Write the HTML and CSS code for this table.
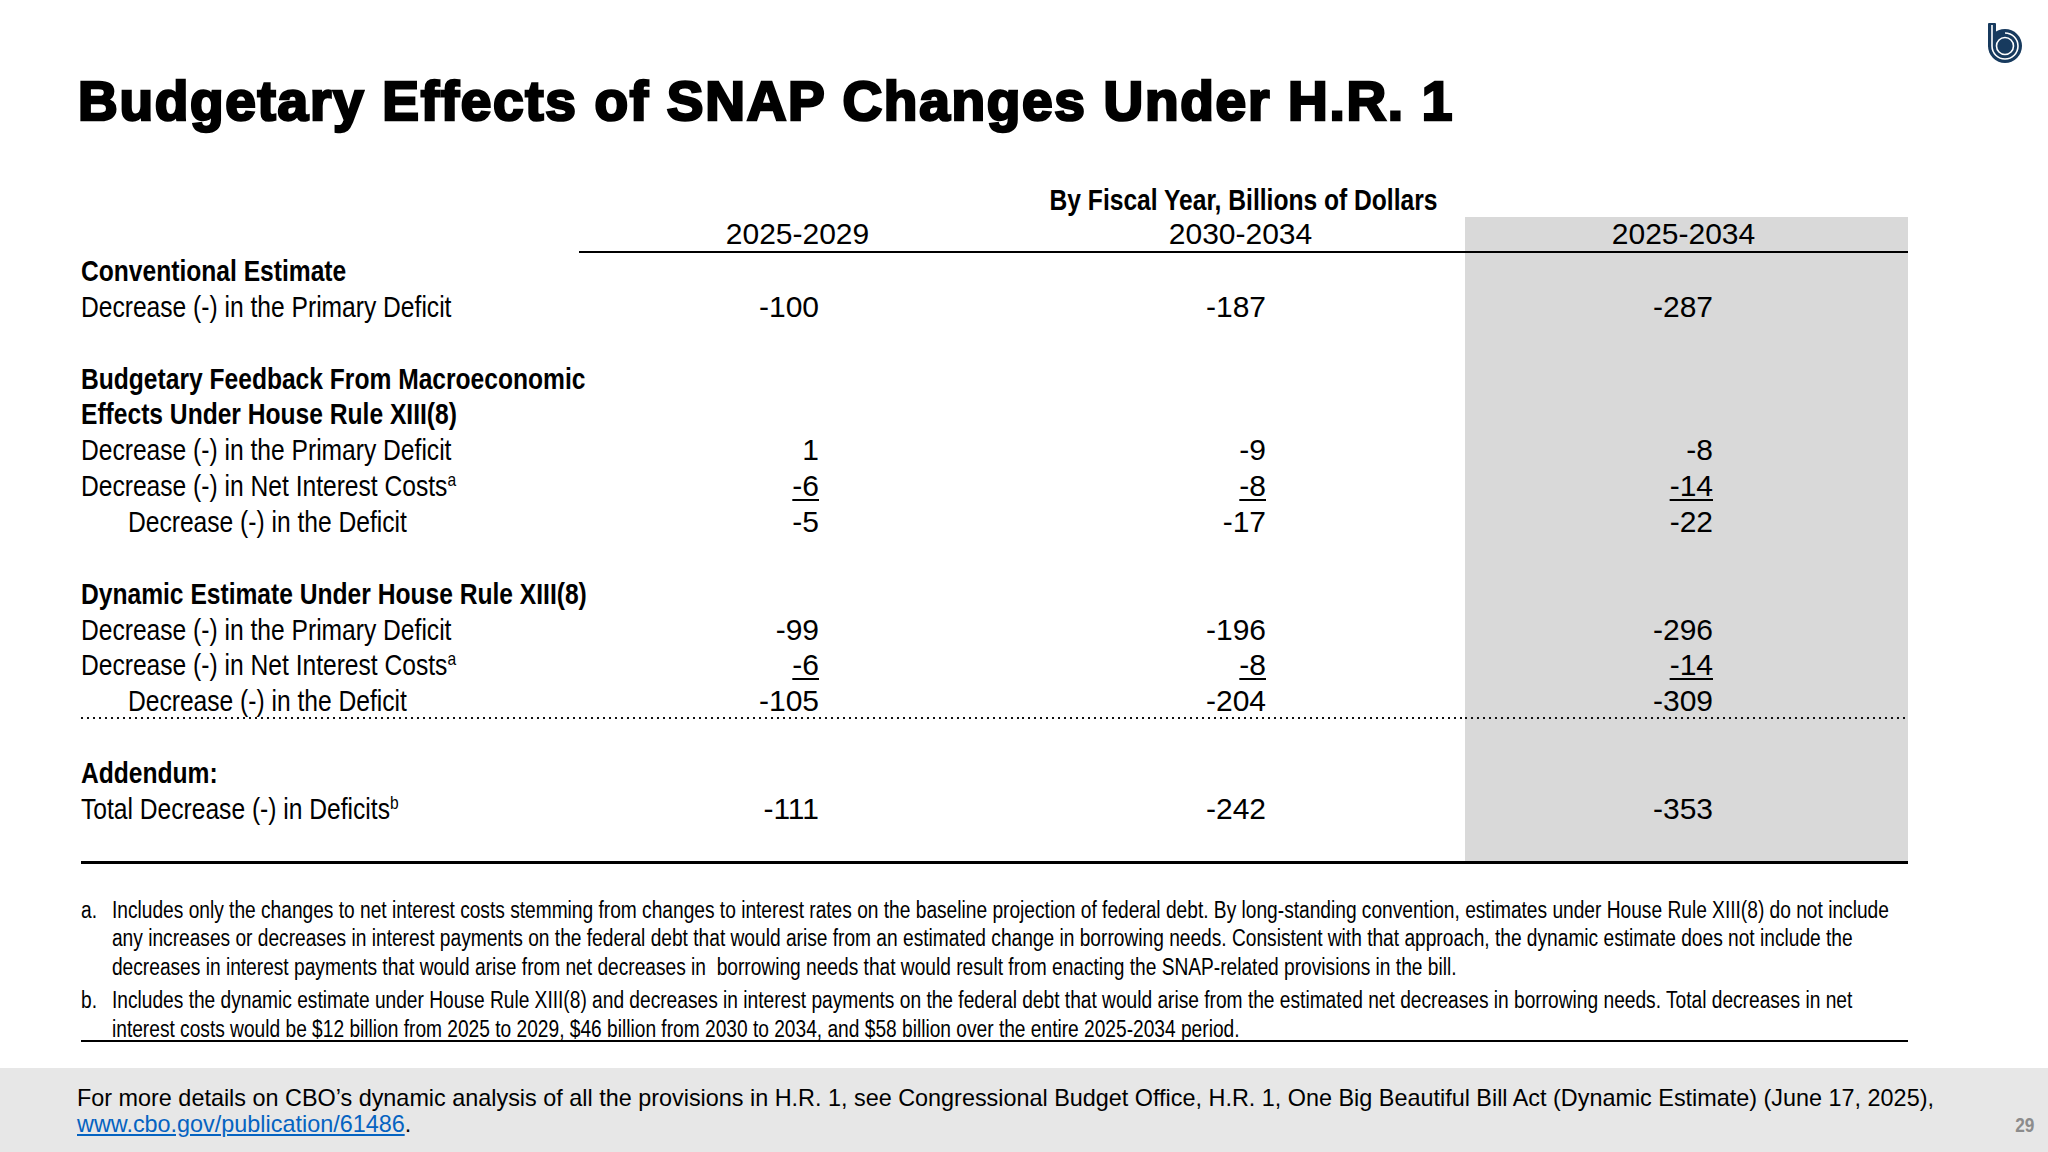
FILE: index.html
```html
<!DOCTYPE html>
<html lang="en">
<head>
<meta charset="utf-8">
<title>Budgetary Effects of SNAP Changes Under H.R. 1</title>
<link rel="stylesheet" href="styles.css">
</head>
<body>
<div class="slide">
  <header class="top">
    <h1 class="title">Budgetary Effects of SNAP Changes Under H.R. 1</h1>
    <svg class="logo" viewBox="0 0 40 44" aria-label="CBO logo">
      <rect x="4" y="3" width="8" height="24" rx="1" fill="#173a5e"/>
      <circle cx="21" cy="26" r="17" fill="#173a5e"/>
      <path d="M8 5 V26 A13 13 0 1 0 21 13" fill="none" stroke="#fff" stroke-width="1.6"/>
      <circle cx="21" cy="26" r="8.5" fill="none" stroke="#fff" stroke-width="1.6"/>
    </svg>
  </header>

  <table class="budget">
    <colgroup>
      <col class="c-label"><col class="c-num"><col class="c-num"><col class="c-num">
    </colgroup>
    <thead>
      <tr class="caption-row"><th></th><th colspan="3" class="caption"><span class="nw nc">By Fiscal Year, Billions of Dollars</span></th></tr>
      <tr class="head-row"><th></th><th class="yr">2025-2029</th><th class="yr">2030-2034</th><th class="yr g">2025-2034</th></tr>
    </thead>
    <tbody>
      <tr><td class="lab sec"><span class="nw">Conventional Estimate</span></td><td></td><td></td><td class="g"></td></tr>
      <tr><td class="lab"><span class="nw">Decrease (-) in the Primary Deficit</span></td><td>-100</td><td>-187</td><td class="g">-287</td></tr>
      <tr><td class="lab"></td><td></td><td></td><td class="g"></td></tr>
      <tr><td class="lab sec"><span class="nw">Budgetary Feedback From Macroeconomic</span></td><td></td><td></td><td class="g"></td></tr>
      <tr><td class="lab sec"><span class="nw">Effects Under House Rule XIII(8)</span></td><td></td><td></td><td class="g"></td></tr>
      <tr><td class="lab"><span class="nw">Decrease (-) in the Primary Deficit</span></td><td>1</td><td>-9</td><td class="g">-8</td></tr>
      <tr><td class="lab"><span class="nw">Decrease (-) in Net Interest Costs<sup>a</sup></span></td><td><u>-6</u></td><td><u>-8</u></td><td class="g"><u>-14</u></td></tr>
      <tr><td class="lab ind"><span class="nw">Decrease (-) in the Deficit</span></td><td>-5</td><td>-17</td><td class="g">-22</td></tr>
      <tr><td class="lab"></td><td></td><td></td><td class="g"></td></tr>
      <tr><td class="lab sec"><span class="nw">Dynamic Estimate Under House Rule XIII(8)</span></td><td></td><td></td><td class="g"></td></tr>
      <tr><td class="lab"><span class="nw">Decrease (-) in the Primary Deficit</span></td><td>-99</td><td>-196</td><td class="g">-296</td></tr>
      <tr><td class="lab"><span class="nw">Decrease (-) in Net Interest Costs<sup>a</sup></span></td><td><u>-6</u></td><td><u>-8</u></td><td class="g"><u>-14</u></td></tr>
      <tr class="dot"><td class="lab ind"><span class="nw">Decrease (-) in the Deficit</span></td><td>-105</td><td>-204</td><td class="g">-309</td></tr>
      <tr><td class="lab"></td><td></td><td></td><td class="g"></td></tr>
      <tr><td class="lab sec"><span class="nw">Addendum:</span></td><td></td><td></td><td class="g"></td></tr>
      <tr><td class="lab"><span class="nw">Total Decrease (-) in Deficits<sup>b</sup></span></td><td>-111</td><td>-242</td><td class="g">-353</td></tr>
      <tr class="end"><td class="lab"></td><td></td><td></td><td class="g"></td></tr>
    </tbody>
  </table>

  <div class="notes">
    <div class="notes-in">
      <p class="note"><span class="mk">a.</span><span class="nt">Includes only the changes to net interest costs stemming from changes to interest rates on the baseline projection of federal debt. By long-standing convention, estimates under House Rule XIII(8) do not include<br>any increases or decreases in interest payments on the federal debt that would arise from an estimated change in borrowing needs. Consistent with that approach, the dynamic estimate does not include the<br>decreases in interest payments that would arise from net decreases in&nbsp; borrowing needs that would result from enacting the SNAP-related provisions in the bill.</span></p>
      <p class="note"><span class="mk">b.</span><span class="nt">Includes the dynamic estimate under House Rule XIII(8) and decreases in interest payments on the federal debt that would arise from the estimated net decreases in borrowing needs. Total decreases in net<br>interest costs would be $12 billion from 2025 to 2029, $46 billion from 2030 to 2034, and $58 billion over the entire 2025-2034 period.</span></p>
    </div>
  </div>

  <footer class="foot">
    <p class="ref">For more details on CBO’s dynamic analysis of all the provisions in H.R. 1, see Congressional Budget Office, H.R. 1, One Big Beautiful Bill Act (Dynamic Estimate) (June 17, 2025),<br><a href="#">www.cbo.gov/publication/61486</a>.</p>
    <span class="pg">29</span>
  </footer>
</div>
</body>
</html>
```

FILE: styles.css
```css
* { box-sizing: border-box; }

body {
  margin: 0;
  background: #fff;
}

.slide {
  width: 2048px;
  height: 1152px;
  display: flex;
  flex-direction: column;
  background: #fff;
  color: #000;
  font-family: "Liberation Sans", Arial, sans-serif;
  overflow: hidden;
}

/* condensed text (Arial Narrow look) */
.nw {
  display: inline-block;
  transform: scaleX(0.82);
  transform-origin: 0 50%;
  white-space: nowrap;
}

.nc { transform-origin: 50% 50%; }

/* ---------- header ---------- */
.top {
  display: flex;
  justify-content: space-between;
  align-items: flex-start;
  padding: 0 24px 0 78px;
}

.title {
  margin: 74px 0 0;
  font-size: 55px;
  line-height: 55px;
  font-weight: 700;
  letter-spacing: 1.7px;
  -webkit-text-stroke: 2.6px #000;
  white-space: nowrap;
}

.logo {
  width: 40px;
  height: 44px;
  margin-top: 20px;
}

/* ---------- table ---------- */
.budget {
  margin: 54px 0 0 81px;
  width: 1827px;
  table-layout: fixed;
  border-collapse: separate;
  border-spacing: 0;
  font-size: 30px;
}

.c-label { width: 498px; }
.c-num { width: 443px; }

.budget th,
.budget td {
  padding: 0;
  vertical-align: middle;
  white-space: nowrap;
}

.caption-row th {
  height: 34px;
  line-height: 34px;
}

.caption {
  font-weight: 700;
  text-align: center;
}

.head-row th {
  height: 36px;
  line-height: 34px;
  font-weight: 400;
}

.yr {
  text-align: center;
  padding-right: 6px !important;
  border-bottom: 2px solid #000;
}

.budget tbody td {
  height: 35.87px;
  line-height: 34px;
  text-align: right;
}

.budget tbody td:nth-child(2) { padding-right: 203px; }
.budget tbody td:nth-child(3) { padding-right: 199px; }
.budget tbody td:nth-child(4) { padding-right: 195px; }

.budget td.lab { text-align: left; }
.budget td.sec { font-weight: 700; }
.budget td.ind { padding-left: 47px; }

.budget sup {
  font-size: 19px;
  line-height: 0;
  vertical-align: 10px;
}

.budget u {
  text-decoration-thickness: 2px;
  text-underline-offset: 3px;
}

.g { background-color: #d9d9d9; }

.budget tr.dot td {
  background-image: repeating-linear-gradient(90deg, #111 0 2px, transparent 2px 6px);
  background-size: 100% 2px;
  background-position: left bottom;
  background-repeat: no-repeat;
}

.budget tr.end td {
  height: 37px;
  border-bottom: 3px solid #000;
}

/* ---------- notes ---------- */
.notes {
  margin: 32px 0 0 81px;
  width: 1827px;
  border-bottom: 2px solid #000;
}

.notes-in {
  width: 2242px;
  transform: scaleX(0.815);
  transform-origin: 0 0;
  font-size: 23.5px;
  line-height: 28.7px;
}

.note {
  display: flex;
  margin: 0;
  white-space: nowrap;
}

.note + .note { margin-top: 4px; margin-bottom: -3px; }

.mk {
  flex: none;
  width: 38px;
}

/* ---------- footer ---------- */
.foot {
  margin-top: auto;
  height: 84px;
  background: #e7e7e7;
  display: flex;
  justify-content: space-between;
  align-items: flex-end;
  padding: 17px 14px 17px 77px;
}

.ref {
  margin: 0;
  align-self: flex-start;
  font-size: 23.4px;
  line-height: 26px;
}

.ref a {
  color: #0563c1;
  text-decoration: underline;
}

.pg {
  display: inline-block;
  transform: scaleX(0.82);
  transform-origin: 100% 50%;
  font-weight: 700;
  font-size: 21px;
  line-height: 21px;
  color: #8c8c8c;
}
```
